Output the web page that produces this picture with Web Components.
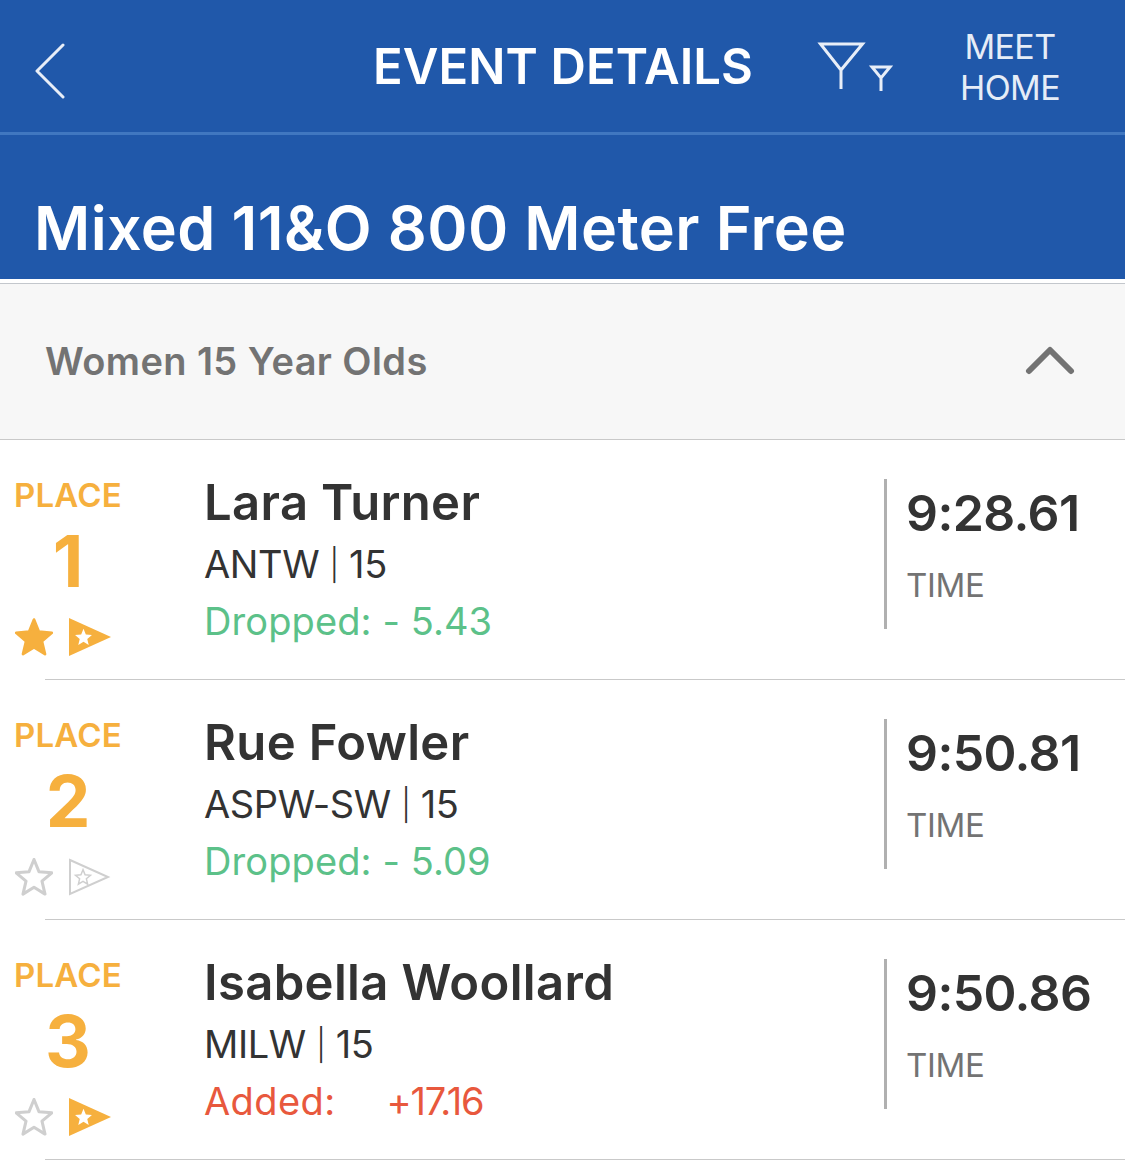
<!DOCTYPE html>
<html>
<head>
<meta charset="utf-8">
<title>Event Details</title>
<style>
  html, body { margin: 0; padding: 0; background: #fff; }
  body { font-family: Inter, "Liberation Sans", sans-serif; width: 1125px; height: 1163px; overflow: hidden; }
</style>
</head>
<body>
<event-header heading="EVENT DETAILS" title-text="Mixed 11&amp;O 800 Meter Free"></event-header>
<group-header label="Women 15 Year Olds"></group-header>
<result-row place="1" name="Lara Turner" team="ANTW | 15" delta="Dropped: - 5.43" kind="drop" time="9:28.61" star="on" flag="on"></result-row>
<result-row place="2" name="Rue Fowler" team="ASPW-SW | 15" delta="Dropped: - 5.09" kind="drop" time="9:50.81" star="off" flag="off"></result-row>
<result-row place="3" name="Isabella Woollard" team="MILW | 15" delta="Added:" delta-value="+17.16" kind="add" time="9:50.86" star="off" flag="on"></result-row>

<script>
class EventHeader extends HTMLElement {
  constructor() {
    super();
    this.attachShadow({ mode: 'open' });
  }

  connectedCallback() {
    const heading = this.getAttribute('heading') || '';
    const titleText = this.getAttribute('title-text') || '';
    this.shadowRoot.innerHTML = `
      <style>
        :host { display: block; background: #2058aa; color: #fff; }
        .nav { height: 132px; border-bottom: 3px solid #4077c0; display: flex; align-items: center; }
        .back { margin-left: 34px; width: 32px; height: 56px; margin-top: 10px; flex: none; }
        .heading { margin-left: 307px; width: 380px; flex: none; font-size: 49px; font-weight: 600; letter-spacing: 0.1px; white-space: nowrap; }
        .filter { margin-left: 64px; width: 76px; height: 52px; margin-top: 2px; flex: none; }
        .home { width: 120px; margin-left: 57px; flex: none; font-size: 34px; line-height: 41px; text-align: center; color: #e6edf7; white-space: nowrap; letter-spacing: -0.6px; margin-top: 2px; }
        .title { height: 144px; box-sizing: border-box; padding: 57px 0 0 34px; font-size: 61px; line-height: 72px; font-weight: 600; letter-spacing: 0.4px; white-space: nowrap; }
      </style>
      <div class="nav">
        <svg class="back" viewBox="0 0 32 56" fill="none" stroke="#e8eef8" stroke-width="3" stroke-linecap="round" stroke-linejoin="round"><path d="M29 2 3 28l26 26"/></svg>
        <span class="heading">${heading}</span>
        <svg class="filter" viewBox="0 0 76 52" fill="none" stroke="#e8eef8" stroke-width="3"><path d="M3.500 3h42L24 29zM24 29v19"/><path d="M55 26h18L64 37zM64 37v13"/></svg>
        <span class="home">MEET<br>HOME</span>
      </div>
      <div class="title">${titleText}</div>
    `;
  }
}

class GroupHeader extends HTMLElement {
  constructor() {
    super();
    this.attachShadow({ mode: 'open' });
  }

  connectedCallback() {
    this.shadowRoot.innerHTML = `
      <style>
        :host { display: block; margin-top: 4px; background: #f7f7f7; border-top: 1px solid #c3c7cc; border-bottom: 1px solid #c9c9c9; }
        .bar { height: 155px; display: flex; align-items: center; justify-content: space-between; padding: 0 50px 0 45px; color: #737373; }
        .label { font-size: 38px; font-weight: 600; letter-spacing: 0.4px; margin-top: -2px; }
        svg { width: 50px; height: 30px; margin-top: -4px; }
      </style>
      <div class="bar">
        <span class="label">${this.getAttribute('label') || ''}</span>
        <svg viewBox="0 0 50 30" fill="none" stroke="#737373" stroke-width="6" stroke-linecap="round" stroke-linejoin="round"><path d="M4 26 25 5l21 21"/></svg>
      </div>
    `;
  }
}

const STAR = 'M50 4 63 36l34 3-26 22 8 34-29-18-29 18 8-34L3 39l34-3z';

class ResultRow extends HTMLElement {
  constructor() {
    super();
    this.attachShadow({ mode: 'open' });
  }

  connectedCallback() {
    const a = (n) => this.getAttribute(n) || '';
    const starOn = a('star') === 'on';
    const flagOn = a('flag') === 'on';
    const starIcon = starOn
      ? `<svg class="star" viewBox="0 0 100 100"><path d="${STAR}" fill="#f6b03e" stroke="#f6b03e" stroke-width="7" stroke-linejoin="round"/></svg>`
      : `<svg class="star" viewBox="0 0 100 100"><path d="${STAR}" fill="none" stroke="#cfcfcf" stroke-width="8" stroke-linejoin="round"/></svg>`;
    const flagIcon = flagOn
      ? `<svg class="flag" viewBox="0 0 42 38"><path d="M0 0 42 19 0 38z" fill="#f6b03e"/><path transform="translate(5.500 10) scale(.18)" d="${STAR}" fill="#fff"/></svg>`
      : `<svg class="flag" viewBox="0 0 42 38"><path d="M1 2 39 19 1 36z" fill="none" stroke="#cfcfcf" stroke-width="2"/><path transform="translate(6 11) scale(.16)" d="${STAR}" fill="none" stroke="#cfcfcf" stroke-width="9"/></svg>`;
    const team = a('team').replace('|', '<span class="pipe">|</span>');
    const value = a('delta-value') ? `<span class="value">${a('delta-value')}</span>` : '';
    this.shadowRoot.innerHTML = `
      <style>
        :host { display: block; }
        .row { height: 239px; box-sizing: border-box; display: flex; padding-top: 39px; }
        .place { width: 136px; flex: none; display: flex; flex-direction: column; align-items: center; color: #f6b03e; }
        .place .lbl { font-size: 33px; line-height: 34px; font-weight: 600; letter-spacing: 0.2px; margin-top: -1px; }
        .place .num { font-size: 71px; line-height: 72px; font-weight: 700; margin-top: 13px; }
        .icons { display: flex; align-items: center; gap: 16px; margin-top: 21px; margin-left: -11px; }
        .star { width: 38px; height: 38px; display: block; }
        .flag { width: 42px; height: 38px; display: block; }
        .info { width: 680px; margin-left: 68px; flex: none; color: #333; white-space: nowrap; }
        .name { font-size: 49px; line-height: 48px; font-weight: 600; letter-spacing: 0.35px; }
        .team { font-size: 38px; line-height: 48px; margin-top: 13px; letter-spacing: -0.4px; }
        .pipe { font-size: 31px; font-weight: 300; vertical-align: 2px; }
        .delta { font-size: 38px; line-height: 48px; margin-top: 8px; letter-spacing: 0.1px; }
        .drop { color: #5cc189; }
        .add { color: #e8583d; letter-spacing: 0.4px; }
        .value { margin-left: 51px; letter-spacing: -1.2px; }
        .time { width: 190px; height: 150px; border-left: 3px solid #b0b0b0; padding-left: 19px; flex: none; }
        .val { font-size: 50px; line-height: 60px; font-weight: 600; color: #333; margin-top: 4px; letter-spacing: -0.6px; }
        .tag { font-size: 33px; line-height: 40px; color: #737373; margin-top: 22px; letter-spacing: -0.3px; }
        .rule { height: 1px; margin-left: 45px; background: #c9c9c9; }
      </style>
      <div class="row">
        <div class="place">
          <span class="lbl">PLACE</span>
          <span class="num">${a('place')}</span>
          <div class="icons">${starIcon}${flagIcon}</div>
        </div>
        <div class="info">
          <div class="name">${a('name')}</div>
          <div class="team">${team}</div>
          <div class="delta ${a('kind')}">${a('delta')}${value}</div>
        </div>
        <div class="time">
          <div class="val">${a('time')}</div>
          <div class="tag">TIME</div>
        </div>
      </div>
      <div class="rule"></div>
    `;
  }
}

customElements.define('event-header', EventHeader);
customElements.define('group-header', GroupHeader);
customElements.define('result-row', ResultRow);
</script>
</body>
</html>
